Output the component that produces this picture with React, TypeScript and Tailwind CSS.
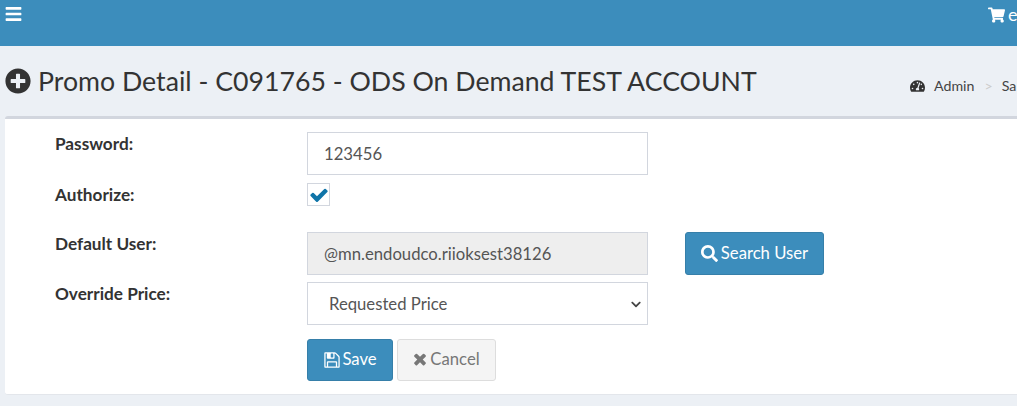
import { FaBars, FaShoppingCart, FaPlusCircle, FaTachometerAlt, FaSearch, FaChevronDown } from "react-icons/fa";

const labelCls = "w-[252px] shrink-0 pt-px text-[17.2px] font-bold leading-[22px] text-[#333]";
const inputCls = "flex h-[43px] w-[341px] items-center border border-[#d2d6de] px-4 pt-[2px] text-[16.7px] text-[#555]";

export default function App() {
  return (
    <div className="h-[406px] w-[1017px] overflow-hidden bg-[#ecf0f5] font-['Lato','Noto_Sans',sans-serif] text-[#333]">
      {/* Top nav */}
      <div className="flex h-[46px] justify-between bg-[#3c8dbc] pl-[5px] text-white">
        <FaBars className="mt-[5px] h-[18px] w-[17px]" />
        <div className="flex w-[29px] items-start gap-[3px] overflow-hidden pt-[3px]">
          <FaShoppingCart className="mt-[4px] h-[16px] w-[17px] shrink-0" />
          <span className="text-[18px] leading-[22px]">e</span>
        </div>
      </div>

      {/* Page title */}
      <div className="flex h-[70px] items-start justify-between pl-[5px]">
        <h1 className="mt-[19px] flex items-center gap-[7px] whitespace-nowrap text-[26.7px] leading-[32px] font-normal text-[#333]">
          <FaPlusCircle className="h-[26px] w-[26px]" />
          Promo Detail - C091765 - ODS On Demand TEST ACCOUNT
        </h1>
        <div className="mt-[30px] flex w-[107px] items-center overflow-hidden whitespace-nowrap text-[14.2px] leading-[20px]">
          <FaTachometerAlt className="h-[14px] w-[15px] shrink-0 text-[#333]" />
          <span className="ml-[9px] text-[#444]">Admin</span>
          <span className="ml-[10px] mr-[9px] text-[#ccc]">&gt;</span>
          <span className="text-[#444]">Sa</span>
        </div>
      </div>

      {/* Form card */}
      <div className="ml-[5px] h-[279px] rounded-l-[3px] border-t-[3px] border-b border-[#d2d6de] border-b-[#e3e6eb] bg-white pl-[50px] pt-[13px]">
        <div className="flex h-[43px]">
          <label className={labelCls}>Password:</label>
          <div className={inputCls}>123456</div>
        </div>
        <div className="mt-[8px] flex h-[49px]">
          <label className={labelCls}>Authorize:</label>
          <div className="flex h-[23px] w-[23px] items-center justify-center border border-[#d2d6de]">
            <svg viewBox="0 0 1792 1792" className="h-[20px] w-[20px] fill-[#0f74a8]">
              <path d="M1671 566q0 40-28 68l-724 724-136 136q-28 28-68 28t-68-28l-136-136-362-362q-28-28-28-68t28-68l136-136q28-28 68-28t68 28l294 295 656-657q28-28 68-28t68 28l136 136q28 28 28 68z" />
            </svg>
          </div>
        </div>
        <div className="flex h-[43px]">
          <label className={labelCls}>Default User:</label>
          <div className={`${inputCls} bg-[#eee]`}>@mn.endoudco.riioksest38126</div>
          <button className="ml-[37px] flex h-[43px] w-[139px] items-center justify-center gap-[3px] rounded-[3px] border border-[#367fa9] bg-[#3c8dbc] text-[16.7px] text-white">
            <FaSearch className="h-[17px] w-[17px]" />
            Search User
          </button>
        </div>
        <div className="mt-[7px] flex h-[43px]">
          <label className={labelCls}>Override Price:</label>
          <div className={`${inputCls} justify-between pl-[21px] pr-[5px]`}>
            Requested Price
            <FaChevronDown className="h-[11px] w-[12px] text-[#444]" />
          </div>
        </div>
        <div className="mt-[14px] flex gap-[4px] pl-[252px]">
          <button className="flex h-[42px] w-[86px] items-center justify-center gap-[1px] rounded-[3px] border border-[#367fa9] bg-[#3c8dbc] text-[16.7px] text-white">
            <svg viewBox="0 0 1792 1792" className="h-[18px] w-[18px] fill-white">
              <path d="M512 1536h768v-384h-768v384zm896 0h128v-896q0-14-10-38.500t-20-34.500l-281-281q-10-10-34-20t-39-10v416q0 40-28 68t-68 28h-576q-40 0-68-28t-28-68v-416h-128v1280h128v-416q0-40 28-68t68-28h832q40 0 68 28t28 68v416zm-384-928v-320q0-13-9.500-22.500t-22.500-9.500h-192q-13 0-22.500 9.500t-9.500 22.500v320q0 13 9.500 22.500t22.500 9.500h192q13 0 22.500-9.500t9.500-22.500zm640 32v928q0 40-28 68t-68 28h-1344q-40 0-68-28t-28-68v-1344q0-40 28-68t68-28h928q40 0 88 20t76 48l280 280q28 28 48 76t20 88z" />
            </svg>
            Save
          </button>
          <button className="flex h-[42px] w-[99px] items-center justify-center gap-[3px] rounded-[3px] border border-[#ddd] bg-[#f4f4f4] text-[16.7px] text-[#777]">
            <svg viewBox="0 0 1408 1792" className="h-[18px] w-[14px] fill-[#777]">
              <path d="M1298 1214q0 40-28 68l-136 136q-28 28-68 28t-68-28l-294-294-294 294q-28 28-68 28t-68-28l-136-136q-28-28-28-68t28-68l294-294-294-294q-28-28-28-68t28-68l136-136q28-28 68-28t68 28l294 294 294-294q28-28 68-28t68 28l136 136q28 28 28 68t-28 68l-294 294 294 294q28 28 28 68z" />
            </svg>
            Cancel
          </button>
        </div>
      </div>
    </div>
  );
}
